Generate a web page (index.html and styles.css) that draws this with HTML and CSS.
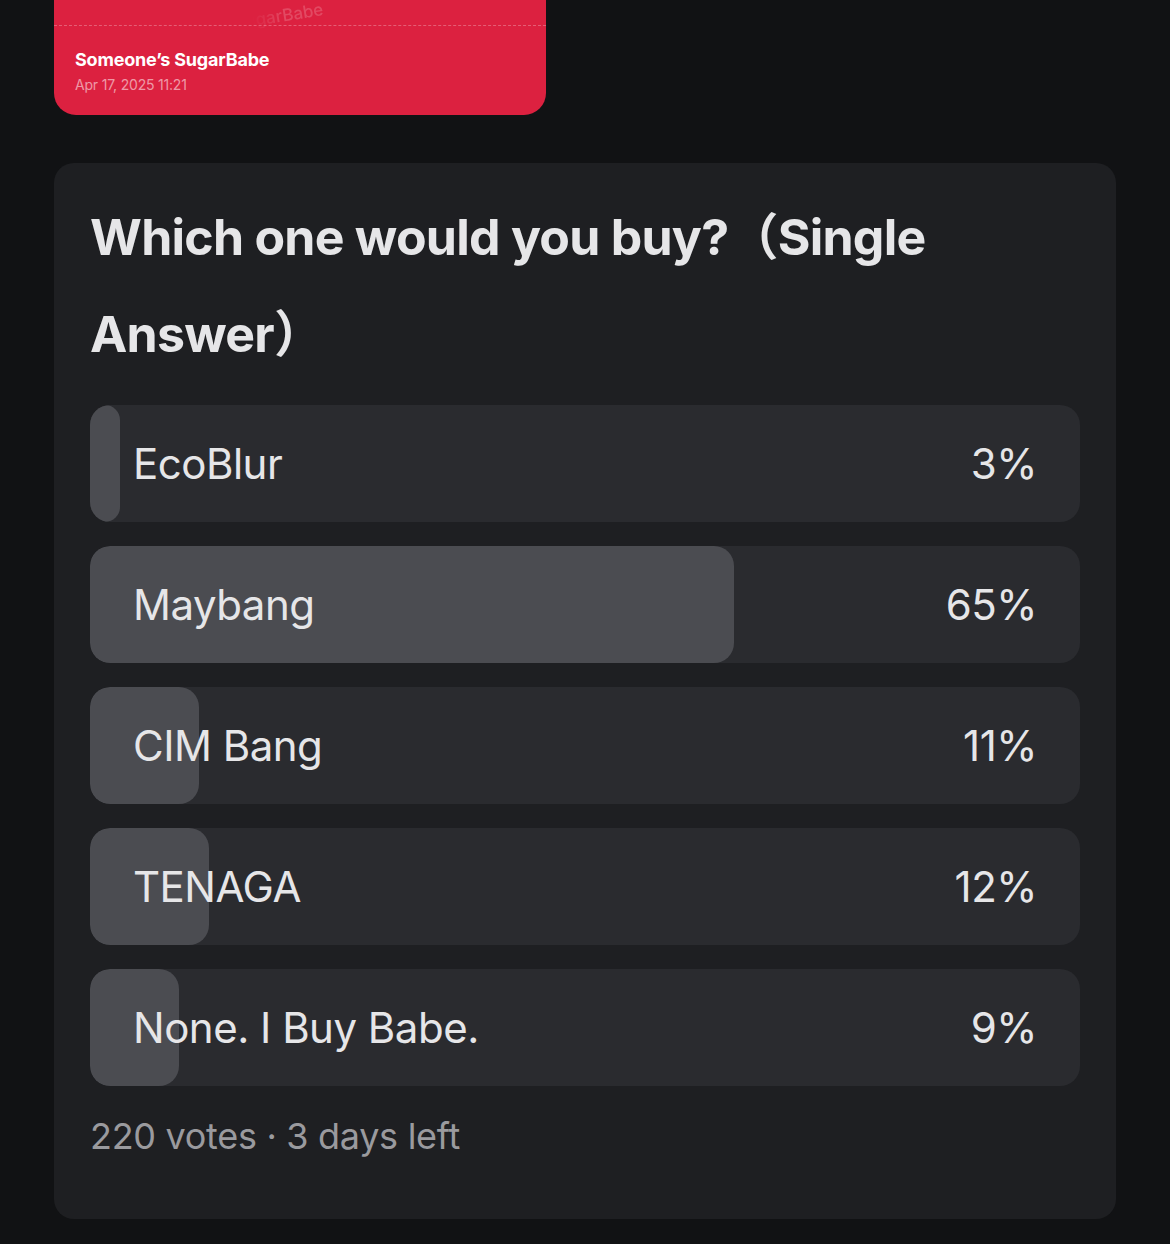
FILE: index.html
```html
<!DOCTYPE html>
<html>
<head>
<meta charset="utf-8">
<link rel="stylesheet" href="styles.css">
</head>
<body>
<div class="page">
  <div class="ticket">
    <div class="ticket-perf"></div>
    <span class="ticket-mark">SugarBabe</span>
    <div class="ticket-name">Someone’s SugarBabe</div>
    <div class="ticket-date">Apr 17, 2025 11:21</div>
  </div>

  <div class="poll">
    <h1 class="poll-title">Which one would you buy?（Single Answer）</h1>
    <div class="options">
      <div class="option"><div class="fill" style="width:3%"></div><span class="label">EcoBlur</span><span class="pct">3%</span></div>
      <div class="option"><div class="fill" style="width:65%"></div><span class="label">Maybang</span><span class="pct">65%</span></div>
      <div class="option"><div class="fill" style="width:11%"></div><span class="label">CIM Bang</span><span class="pct">11%</span></div>
      <div class="option"><div class="fill" style="width:12%"></div><span class="label">TENAGA</span><span class="pct">12%</span></div>
      <div class="option"><div class="fill" style="width:9%"></div><span class="label">None. I Buy Babe.</span><span class="pct">9%</span></div>
    </div>
    <div class="poll-meta">220 votes · 3 days left</div>
  </div>
</div>
</body>
</html>
```
FILE: styles.css
```css
html, body {
  margin: 0;
  padding: 0;
  background: #111214;
}
body {
  font-family: Inter, "Noto Sans CJK SC", sans-serif;
  color: #e6e6e8;
}
.page {
  padding: 0 54px 40px 54px;
  display: flex;
  flex-direction: column;
  gap: 48px;
}
.ticket {
  position: relative;
  width: 492px;
  height: 115px;
  box-sizing: border-box;
  background: #dc2140;
  border-radius: 0 0 22px 22px;
  padding: 48px 21px 0 21px;
  overflow: hidden;
}
.ticket-perf {
  position: absolute;
  left: 0;
  right: 0;
  top: 25px;
  border-top: 1px dashed rgba(255, 255, 255, 0.28);
}
.ticket-mark {
  position: absolute;
  left: 180px;
  top: 6px;
  font-size: 17px;
  font-weight: 500;
  line-height: 20px;
  color: rgba(255, 255, 255, 0.18);
  transform: rotate(-9deg);
  -webkit-mask-image: linear-gradient(to right, transparent 20%, #000 55%);
  mask-image: linear-gradient(to right, transparent 20%, #000 55%);
}
.ticket-name {
  font-size: 18px;
  font-weight: 700;
  color: #ffffff;
  line-height: 24px;
  letter-spacing: -0.2px;
}
.ticket-date {
  font-size: 14px;
  color: rgba(255, 255, 255, 0.55);
  line-height: 22px;
  margin-top: 2px;
  letter-spacing: -0.2px;
}
.poll {
  background: #1e1f22;
  border-radius: 20px;
  padding: 26px 36px 61px 36px;
  display: flex;
  flex-direction: column;
}
.poll-title {
  margin: 0;
  font-size: 50px;
  font-weight: 700;
  line-height: 97px;
  color: #e6e6e8;
  letter-spacing: -0.75px;
  max-width: 860px;
}
.options {
  margin-top: 22px;
  display: flex;
  flex-direction: column;
  gap: 24px;
}
.option {
  position: relative;
  height: 117px;
  background: #2a2b2f;
  border-radius: 20px;
  display: flex;
  align-items: center;
  justify-content: space-between;
  padding: 0 44px 0 43px;
  overflow: hidden;
}
.fill {
  position: absolute;
  left: 0;
  top: 0;
  bottom: 0;
  background: #4b4c51;
  border-radius: 20px;
}
.label, .pct {
  position: relative;
  font-size: 42px;
  font-weight: 400;
  color: #e6e6e8;
  letter-spacing: -0.5px;
}
.pct {
  margin-right: -1px;
}
.poll-meta {
  margin-top: 28px;
  font-size: 36px;
  color: #9a9a9e;
  line-height: 44px;
  letter-spacing: -0.3px;
}
```
